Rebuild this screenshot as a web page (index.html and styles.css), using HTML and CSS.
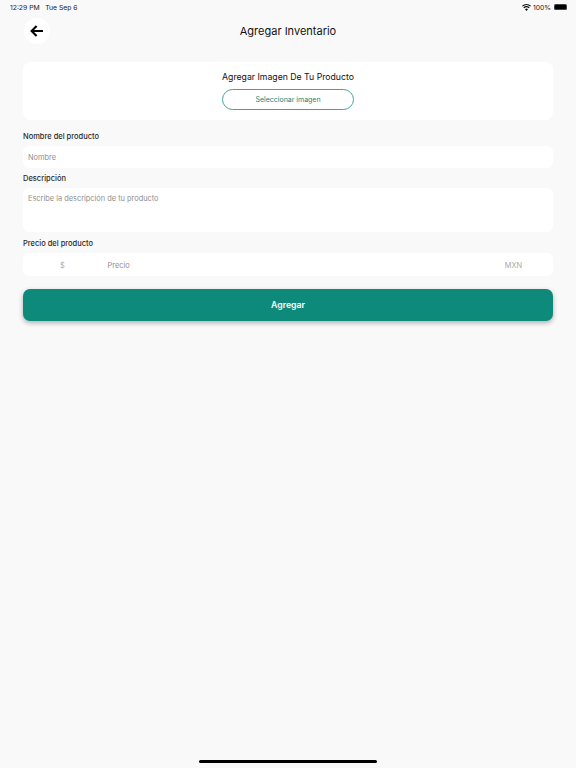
FILE: index.html
```html
<!DOCTYPE html>
<html lang="es">
<head>
  <meta charset="UTF-8" />
  <meta name="viewport" content="width=device-width, initial-scale=1.0"/>
  <title>Agregar Inventario</title>
  <link rel="stylesheet" href="styles.css">
</head>
<body>

<div class="status">
  <div class="status-left"><span>12:29 PM</span><span>Tue Sep 6</span></div>
  <div class="status-right">
    <svg class="wifi" width="9" height="7" viewBox="0 0 20 15"><path d="M10 15 6.7 11.2a5 5 0 0 1 6.6 0ZM4.9 9.2 2.9 7a11 11 0 0 1 14.2 0l-2 2.2a8 8 0 0 0-10.2 0ZM1.6 5.500 0 3.700a15 15 0 0 1 20 0l-1.600 1.800a12.600 12.600 0 0 0-16.800 0Z" fill="#111"/></svg>
    <span>100%</span>
    <div class="battery"><div class="battery-fill"></div></div>
  </div>
</div>

<div class="page">
  <header class="top">
    <button class="back">
      <svg width="14" height="12" viewBox="0 0 14 12"><path d="M13 6H2.500M6.600 1 1.600 6l5 5" fill="none" stroke="#000" stroke-width="2.100"/></svg>
    </button>
    <h1>Agregar Inventario</h1>
  </header>

  <section class="image-card">
    <h2>Agregar Imagen De Tu Producto</h2>
    <button class="select-btn">Seleccionar imagen</button>
  </section>

  <label class="label label-name">Nombre del producto</label>
  <div class="field field-name">Nombre</div>

  <label class="label label-desc">Descripción</label>
  <div class="field field-desc">Escribe la descripción de tu producto</div>

  <label class="label label-price">Precio del producto</label>
  <div class="field field-price">
    <span class="currency">$</span>
    <span class="price">Precio</span>
    <span class="mxn">MXN</span>
  </div>

  <button class="submit">Agregar</button>
</div>

<div class="home-bar"></div>

</body>
</html>
```

FILE: styles.css
```css
*{box-sizing:border-box;}
body{
  font-family: Inter, "Liberation Sans", sans-serif;
  background:#f9f9f9;
  margin:0;
  height:768px;
  display:flex;flex-direction:column;
  overflow:hidden;
}
button{font-family:inherit;cursor:pointer;}

.status{
  height:14px;
  padding:0 9px 0 10px;
  display:flex;justify-content:space-between;align-items:center;
  font-size:6.800px;color:#222;
}
.status-left{display:flex;gap:5.500px;}
.status-right{display:flex;align-items:center;gap:2px;}
.battery{
  width:13px;height:6px;margin-left:1px;padding:1px;
  border-radius:1.500px;background:#444;
}
.battery-fill{height:100%;background:#000;border-radius:1px;}

.page{padding:0 23px;flex:1;display:flex;flex-direction:column;}

.top{display:flex;align-items:center;height:34px;margin-bottom:14px;}
.back{
  width:26px;height:26px;margin-left:1px;padding:0;
  border:none;border-radius:50%;background:#fff;
  display:flex;align-items:center;justify-content:center;
}
.top h1{
  flex:1;margin:0;padding-right:27px;
  text-align:center;font-size:11px;font-weight:400;color:#111;
}

.image-card{
  height:58px;background:#fff;border-radius:8px;
  display:flex;flex-direction:column;align-items:center;
  padding-top:9px;
}
.image-card h2{margin:0 0 6px;font-size:8.700px;line-height:12px;font-weight:400;color:#111;}
.select-btn{
  width:132px;height:21px;padding:0;
  background:#fff;border:1px solid #3fa596;border-radius:11px;
  font-size:7px;color:#0e8a7a;
}

.label{font-size:7.500px;line-height:11px;font-weight:500;color:#2a2a2a;}
.label-name{margin-top:11px;}
.label-desc{margin-top:5px;}
.label-price{margin-top:6px;}

.field{
  background:#fff;border-radius:6px;
  font-size:7.400px;color:#8f8f8f;
  padding:0 5px;
}
.field-name{height:22px;margin-top:4px;display:flex;align-items:center;}
.field-desc{height:44px;margin-top:4px;padding-top:6px;line-height:10px;}
.field-price{height:23px;margin-top:4px;padding-top:2px;display:flex;align-items:center;}
.currency{width:79.500px;padding-left:32px;color:#aaa;}
.price{flex:1;}
.mxn{color:#aaa;margin-right:26px;}

.submit{
  height:31.500px;margin-top:13px;
  background:#0e8a7a;color:#fff;border:none;border-radius:7px;
  font-size:8.700px;font-weight:600;
  box-shadow:0 2px 5px rgba(0,0,0,.3);
}

.home-bar{
  width:178px;height:3px;margin:0 auto 5px;
  background:#000;border-radius:2px;
}
```
